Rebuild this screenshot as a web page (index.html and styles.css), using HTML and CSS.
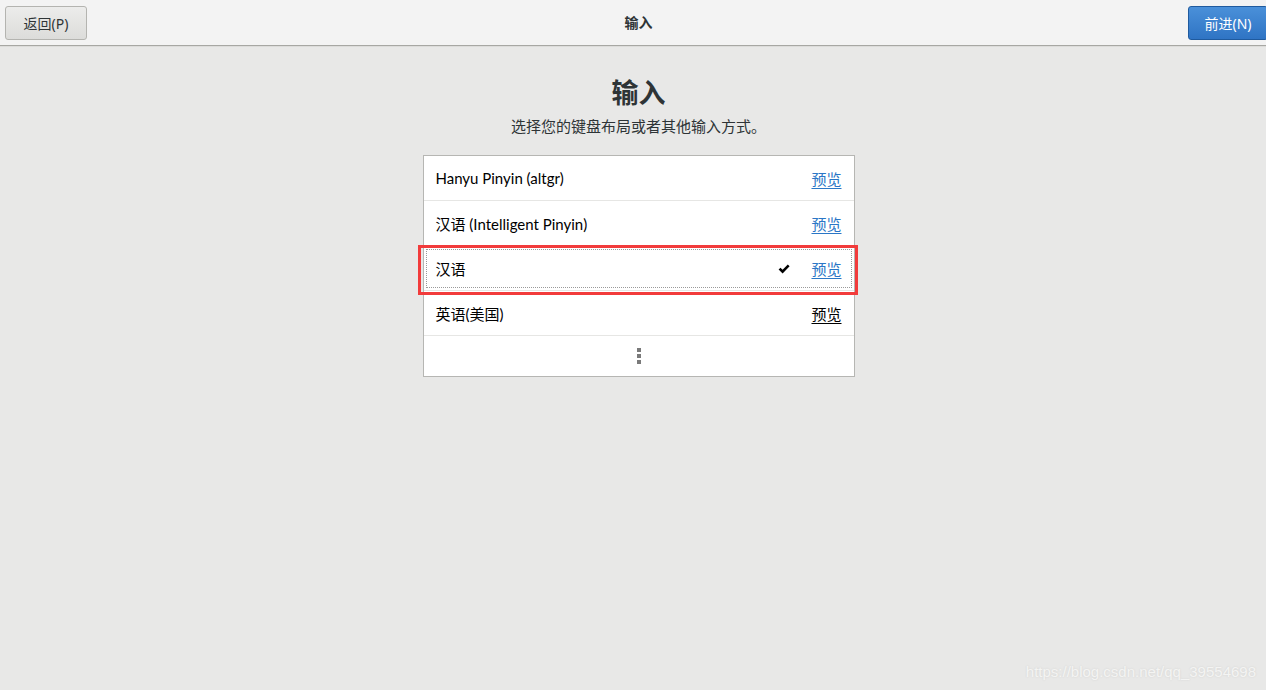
FILE: index.html
```html
<!DOCTYPE html>
<html lang="zh">
<head>
<meta charset="utf-8">
<title>输入</title>
<link rel="stylesheet" href="styles.css">
</head>
<body>
<header class="topbar">
  <button class="btn btn-back">返回(P)</button>
  <div class="topbar-title">输入</div>
  <button class="btn btn-next">前进(N)</button>
</header>
<main class="content">
  <h1 class="title">输入</h1>
  <p class="subtitle">选择您的键盘布局或者其他输入方式。</p>
  <div class="list">
    <div class="row">
      <span class="name">Hanyu Pinyin (altgr)</span>
      <a class="preview">预览</a>
    </div>
    <div class="row">
      <span class="name">汉语 (Intelligent Pinyin)</span>
      <a class="preview">预览</a>
    </div>
    <div class="row row-selected">
      <div class="focus">
        <span class="name">汉语</span>
        <svg class="check" width="12" height="10" viewBox="0 0 12 10"><path d="M0.6 5.6 L2.5 3.8 L4.6 5.8 L9.8 0.4 L11.6 2.2 L4.6 9.4 Z" fill="#000"/></svg>
        <a class="preview">预览</a>
      </div>
      <div class="highlight"></div>
    </div>
    <div class="row">
      <span class="name">英语(美国)</span>
      <a class="preview preview-dark">预览</a>
    </div>
    <div class="row row-more">
      <span class="dots"><i></i><i></i><i></i></span>
    </div>
  </div>
</main>
<div class="watermark">https://blog.csdn.net/qq_39554698</div>
</body>
</html>
```

FILE: styles.css
```css
html, body {
  margin: 0;
  padding: 0;
  height: 100%;
}
body {
  background: #e8e8e7;
  font-family: "Lato", "Noto Sans CJK SC", sans-serif;
  color: #2e3436;
  position: relative;
  overflow: hidden;
}
.topbar {
  height: 45px;
  background: #f3f3f3;
  border-bottom: 1px solid #a7a7a3;
  box-shadow: 0 1px 0 #dcdcda;
  display: flex;
  align-items: center;
  justify-content: space-between;
  position: relative;
  padding: 0 0 0 5px;
}
.topbar-title {
  position: absolute;
  left: 11px;
  right: 0;
  text-align: center;
  top: 12px;
  font-family: "Noto Sans", "Noto Sans CJK SC", sans-serif;
  font-size: 14px;
  font-weight: bold;
  color: #2e3436;
  pointer-events: none;
}
.btn {
  height: 34px;
  font-family: "Noto Sans", "Noto Sans CJK SC", sans-serif;
  font-size: 14px;
  border-radius: 3px;
  padding: 0;
  margin-top: 1px;
}
.btn-back {
  width: 82px;
  background: linear-gradient(#ececeb, #dcdcda);
  border: 1px solid #b4b4b0;
  color: #2e3436;
}
.btn-next {
  width: 80px;
  margin-right: -2px;
  background: linear-gradient(#4a90d9, #2f74c4);
  border: 1px solid #1f5a9e;
  color: #fff;
}
.content {
  display: flex;
  flex-direction: column;
  align-items: center;
  padding-left: 11px;
}
.title {
  margin: 31px 0 0;
  font-family: "Noto Sans", "Noto Sans CJK SC", sans-serif;
  font-size: 27px;
  line-height: 32px;
  font-weight: bold;
  color: #2e3436;
}
.subtitle {
  margin: 7px 0 0;
  font-size: 15px;
  line-height: 20px;
  color: #2e3436;
}
.list {
  margin-top: 19px;
  width: 430px;
  background: #fff;
  border: 1px solid #b6b6b3;
}
.row {
  height: 44px;
  border-bottom: 1px solid #e6e6e4;
  display: flex;
  align-items: center;
  padding: 0 12px;
  font-size: 15px;
  color: #000;
  position: relative;
}
.name {
  flex: 1;
}
.preview {
  color: #2a76c6;
  text-decoration: underline;
  text-underline-offset: 3px;
  cursor: pointer;
}
.preview-dark {
  color: #000;
}
.row-selected {
  padding: 0;
}
.focus {
  position: absolute;
  inset: 3px 2px 2px 2px;
  border: 1px dotted #9a9a9a;
  display: flex;
  align-items: center;
  padding: 0 9px 0 9px;
}
.check {
  display: block;
  margin-right: 21px;
}
.highlight {
  position: absolute;
  left: -6px;
  right: -4px;
  top: -1px;
  bottom: -5px;
  border: 3px solid #f23b3b;
  pointer-events: none;
}
.row-more {
  height: 40px;
  border-bottom: none;
  justify-content: center;
}
.dots {
  display: flex;
  flex-direction: column;
  gap: 2px;
  margin-left: 1px;
}
.dots i {
  display: block;
  width: 4px;
  height: 4px;
  background: #7a7a7a;
}
.watermark {
  position: absolute;
  right: 10px;
  bottom: 10px;
  font-family: "Liberation Sans", sans-serif;
  font-size: 15px;
  color: #f4f4f3;
  text-shadow: 0 0 2px #cfcfcd;
}
```
